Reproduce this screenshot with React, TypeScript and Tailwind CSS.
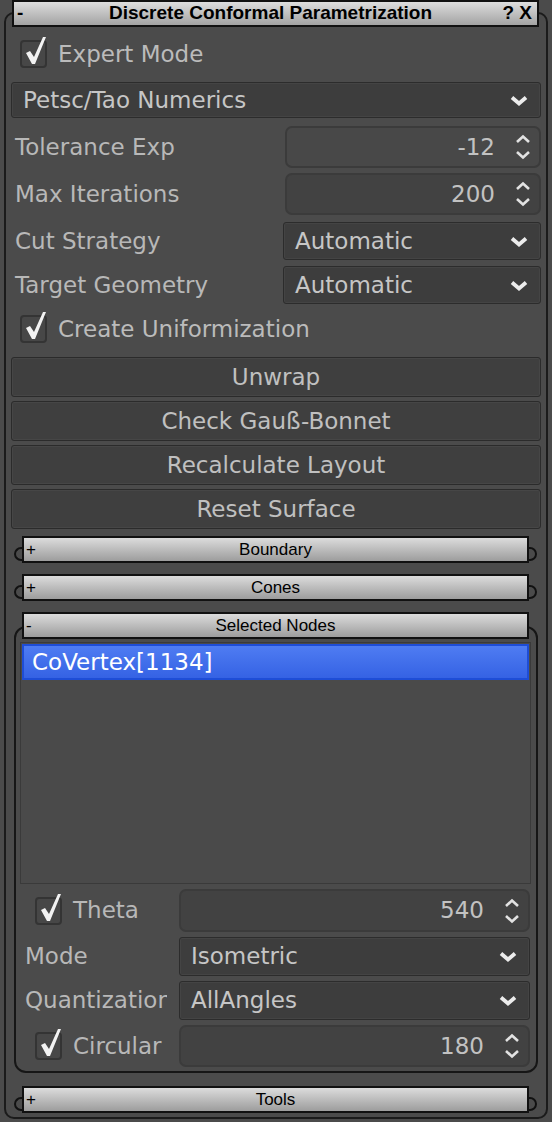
import React from "react";

const ui = "font-['DejaVu_Sans',sans-serif]";

function Check() {
  return (
    <span className="relative block w-[27px] h-[28px] shrink-0 rounded-[4px] border-2 border-[#343434] bg-[#474747]">
      <svg className="absolute left-[3px] -top-[6px]" width="24" height="30" viewBox="0 0 24 30">
        <path d="M1 17 L5 15 L9 21 L18 1 L21 1 L10 28 L7 28 Z" fill="#f2f2f2" />
      </svg>
    </span>
  );
}

function Chevron() {
  return (
    <svg width="18" height="11" viewBox="0 0 18 11" className="shrink-0">
      <polyline points="2,2.5 9,8.5 16,2.5" fill="none" stroke="#ececec" strokeWidth="3.8" />
    </svg>
  );
}

function Arrows() {
  return (
    <svg width="16" height="28" viewBox="0 0 16 28" className="shrink-0">
      <polyline points="2,9 8,3.5 14,9" fill="none" stroke="#e2e2e2" strokeWidth="2.6" />
      <polyline points="2,19 8,24.5 14,19" fill="none" stroke="#e2e2e2" strokeWidth="2.6" />
    </svg>
  );
}

function Dropdown({ text, className }: { text: string; className: string }) {
  return (
    <div
      className={`flex items-center justify-between rounded-[3px] border border-[#2c2c2c] bg-[#3d3d3d] shadow-[inset_0_0_0_1px_#444] pl-[11px] pr-[12px] text-[#c6c6c6] ${className}`}
    >
      <span>{text}</span>
      <Chevron />
    </div>
  );
}

function Spin({ value, className, light }: { value: string; className: string; light?: boolean }) {
  return (
    <div
      className={`flex items-center rounded-[7px] border-2 border-[#3b3b3b] ${
        light ? "bg-[#484848]" : "bg-[#424242]"
      } text-[#c2c2c2] ${className}`}
    >
      <span className="flex-1 text-right pr-[20px]">{value}</span>
      <span className="pr-[8px]">
        <Arrows />
      </span>
    </div>
  );
}

function Button({ label }: { label: string }) {
  return (
    <div className="flex h-[40px] items-center justify-center rounded-[3px] border border-[#2b2b2b] bg-[#3f3f3f] shadow-[inset_0_0_0_1px_#464646] text-[#c0c0c0]">
      {label}
    </div>
  );
}

function Header({ sign, label }: { sign: string; label: string }) {
  return (
    <div className="relative z-10 flex h-[27px] items-center border-2 border-[#111] bg-gradient-to-b from-[#dcdcdc] to-[#9d9d9d] font-['Liberation_Sans',sans-serif] text-[17px] text-black">
      <span className="w-[20px] pl-[2px] leading-none">{sign}</span>
      <span className="flex-1 text-center pr-[20px]">{label}</span>
    </div>
  );
}

function Collapsed({ label, className }: { label: string; className: string }) {
  return (
    <div className={`relative ml-[16px] mr-[17px] ${className}`}>
      <span className="absolute -left-[8px] top-[11px] h-[14px] w-[9px] rounded-l-full border-2 border-r-0 border-[#111]" />
      <span className="absolute -right-[8px] top-[11px] h-[14px] w-[9px] rounded-r-full border-2 border-l-0 border-[#111]" />
      <Header sign="+" label={label} />
    </div>
  );
}

export default function App() {
  return (
    <div className={`w-[552px] h-[1122px] overflow-hidden bg-[#4b4b4b] pt-[12px] px-[4px] text-[23px] ${ui}`}>
      <div className="h-[1107px] rounded-[10px] border-2 border-[#1b1b1b] flex flex-col">
        {/* Title */}
        <div className="-mt-[14px] ml-[6px] mr-[7px] flex h-[27px] items-center border-2 border-[#111] bg-gradient-to-b from-[#dedede] to-[#a3a3a3] font-['Liberation_Sans',sans-serif] text-[19px] font-bold text-black">
          <span className="w-[30px] pl-[3px]">-</span>
          <span className="flex-1 text-center">Discrete Conformal Parametrization</span>
          <span className="w-[40px] pr-[5px] text-right">? X</span>
        </div>

        <div className="px-[5px] flex flex-col">
          <div className="mt-[11px] flex h-[32px] items-center gap-[11px] pl-[9px] text-[#bbbbbb]">
            <Check />
            <span>Expert Mode</span>
          </div>

          <Dropdown text="Petsc/Tao Numerics" className="mt-[12px] h-[36px]" />

          <div className="mt-[8px] flex items-center justify-between text-[#b8b8b8]">
            <span className="pl-[4px]">Tolerance Exp</span>
            <Spin value="-12" light className="w-[256px] h-[42px]" />
          </div>
          <div className="mt-[5px] flex items-center justify-between text-[#b8b8b8]">
            <span className="pl-[4px]">Max Iterations</span>
            <Spin value="200" className="w-[256px] h-[42px]" />
          </div>
          <div className="mt-[7px] flex items-center justify-between text-[#b8b8b8]">
            <span className="pl-[4px]">Cut Strategy</span>
            <Dropdown text="Automatic" className="w-[258px] h-[38px]" />
          </div>
          <div className="mt-[6px] flex items-center justify-between text-[#b8b8b8]">
            <span className="pl-[4px]">Target Geometry</span>
            <Dropdown text="Automatic" className="w-[258px] h-[38px]" />
          </div>

          <div className="mt-[8px] flex h-[34px] items-center gap-[11px] pl-[9px] text-[#bbbbbb]">
            <Check />
            <span>Create Uniformization</span>
          </div>

          <div className="mt-[11px] flex flex-col gap-[4px]">
            <Button label="Unwrap" />
            <Button label="Check Gauß-Bonnet" />
            <Button label="Recalculate Layout" />
            <Button label="Reset Surface" />
          </div>
        </div>

        <Collapsed label="Boundary" className="mt-[7px]" />
        <Collapsed label="Cones" className="mt-[11px]" />

        {/* Selected Nodes group */}
        <div className="mt-[11px] mx-[8px] flex flex-col">
          <div className="ml-[8px] mr-[9px]">
            <Header sign="-" label="Selected Nodes" />
          </div>
          <div className="-mt-[13px] rounded-[12px] border-2 border-[#161616] pt-[14px] pb-[4px] flex flex-col">
            <div className="ml-[4px] mr-[5px] h-[242px] border border-[#3a3a3a] bg-[#4a4a4a] p-[1px]">
              <div className="flex h-[36px] items-center border-2 border-[#1e4dd6] bg-gradient-to-b from-[#4f7cf2] to-[#3562e4] pl-[8px] text-white">
                CoVertex[1134]
              </div>
            </div>

            <div className="mt-[5px] flex items-center pr-[6px] text-[#b8b8b8]">
              <div className="flex w-[163px] items-center gap-[11px] pl-[19px]">
                <Check />
                <span>Theta</span>
              </div>
              <Spin value="540" className="flex-1 h-[43px]" />
            </div>
            <div className="mt-[5px] flex items-center pr-[6px] text-[#b8b8b8]">
              <span className="w-[163px] pl-[9px]">Mode</span>
              <Dropdown text="Isometric" className="flex-1 h-[39px]" />
            </div>
            <div className="mt-[5px] flex items-center pr-[6px] text-[#b8b8b8]">
              <span className="w-[163px] pl-[9px] whitespace-nowrap">
                <span className="block w-[142px] overflow-hidden">Quantization</span>
              </span>
              <Dropdown text="AllAngles" className="flex-1 h-[39px]" />
            </div>
            <div className="mt-[5px] flex items-center pr-[6px] text-[#b8b8b8]">
              <div className="flex w-[163px] items-center gap-[11px] pl-[19px]">
                <Check />
                <span>Circular</span>
              </div>
              <Spin value="180" className="flex-1 h-[42px]" />
            </div>
          </div>
        </div>

        <Collapsed label="Tools" className="mt-[13px]" />
      </div>
    </div>
  );
}
